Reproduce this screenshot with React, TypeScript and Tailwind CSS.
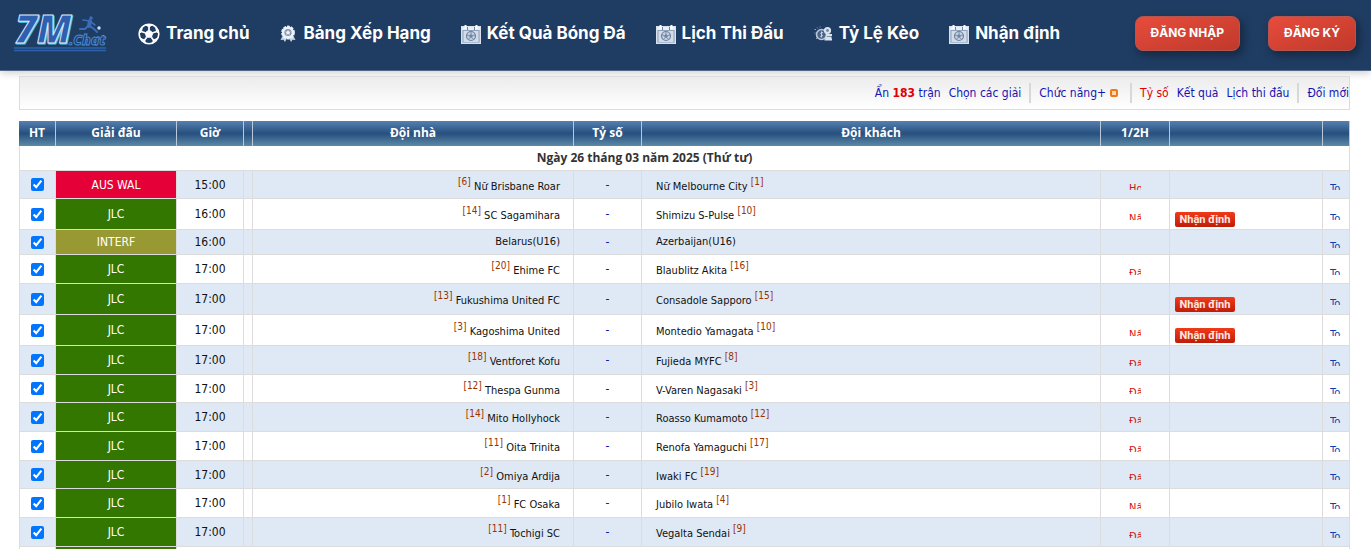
import React from "react";

type Match = {
  league: string;
  time: string;
  home: string;
  homeRank?: string;
  away: string;
  awayRank?: string;
  half?: string;
  tip?: boolean;
  height: string;
};

const leagueColors: Record<string, string> = {
  "AUS WAL": "bg-[#e60038]",
  JLC: "bg-[#337700]",
  INTERF: "bg-[#999933]",
};

const matches: Match[] = [
  { league: "AUS WAL", time: "15:00", home: "Nữ Brisbane Roar", homeRank: "6", away: "Nữ Melbourne City", awayRank: "1", half: "Ho", height: "h-7" },
  { league: "JLC", time: "16:00", home: "SC Sagamihara", homeRank: "14", away: "Shimizu S-Pulse", awayRank: "10", half: "Nấ", tip: true, height: "h-[31px]" },
  { league: "INTERF", time: "16:00", home: "Belarus(U16)", away: "Azerbaijan(U16)", height: "h-[25px]" },
  { league: "JLC", time: "17:00", home: "Ehime FC", homeRank: "20", away: "Blaublitz Akita", awayRank: "16", half: "Đấ", height: "h-[29px]" },
  { league: "JLC", time: "17:00", home: "Fukushima United FC", homeRank: "13", away: "Consadole Sapporo", awayRank: "15", tip: true, height: "h-[31px]" },
  { league: "JLC", time: "17:00", home: "Kagoshima United", homeRank: "3", away: "Montedio Yamagata", awayRank: "10", half: "Nấ", tip: true, height: "h-[31px]" },
  { league: "JLC", time: "17:00", home: "Ventforet Kofu", homeRank: "18", away: "Fujieda MYFC", awayRank: "8", half: "Đấ", height: "h-[29px]" },
  { league: "JLC", time: "17:00", home: "Thespa Gunma", homeRank: "12", away: "V-Varen Nagasaki", awayRank: "3", half: "Đấ", height: "h-7" },
  { league: "JLC", time: "17:00", home: "Mito Hollyhock", homeRank: "14", away: "Roasso Kumamoto", awayRank: "12", half: "Đấ", height: "h-[29px]" },
  { league: "JLC", time: "17:00", home: "Oita Trinita", homeRank: "11", away: "Renofa Yamaguchi", awayRank: "17", half: "Đấ", height: "h-[29px]" },
  { league: "JLC", time: "17:00", home: "Omiya Ardija", homeRank: "2", away: "Iwaki FC", awayRank: "19", half: "Đấ", height: "h-7" },
  { league: "JLC", time: "17:00", home: "FC Osaka", homeRank: "1", away: "Jubilo Iwata", awayRank: "4", half: "Nấ", height: "h-[29px]" },
  { league: "JLC", time: "17:00", home: "Tochigi SC", homeRank: "11", away: "Vegalta Sendai", awayRank: "9", half: "Đấ", height: "h-[29px]" },
];

const Logo = () => (
  <svg width="94" height="38" viewBox="0 0 94 38" className="overflow-visible" aria-label="7M.Chat">
    <g fontFamily="'Open Sans', sans-serif" fontStyle="italic" fontWeight="800">
      <text x="2" y="30" fontSize="38" fill="#4fc3ea" stroke="#4fc3ea" strokeWidth="1">7M</text>
      <text x="1" y="29" fontSize="38" fill="#2f5fae" stroke="#dbe9f8" strokeWidth="1">7M</text>
      <text x="55" y="31" fontSize="14" fill="#1f3f7c" stroke="#4d93d6" strokeWidth="0.8">.Chat</text>
    </g>
    <g stroke="#3b6cb8" strokeLinecap="round" strokeLinejoin="round" fill="none">
      <circle cx="77" cy="4" r="1.8" fill="#3b6cb8" stroke="none" />
      <path d="M76 7 L75 12" strokeWidth="4" />
      <path d="M76 7 L69 6 M77 8 L81 11" strokeWidth="1.6" />
      <path d="M74 12 L71 15 L66 15 M76 12 L80 15 L83 18" strokeWidth="2" />
    </g>
    <circle cx="85" cy="14" r="1.7" fill="#cfe0f3" />
    <path d="M0 34H92M0 36.500H92" stroke="#2f62ad" strokeWidth="1.500" />
  </svg>
);

const BallIcon = () => (
  <svg width="22" height="22" viewBox="0 0 22 22" fill="none" stroke="#fff">
    <circle cx="11" cy="11" r="9.800" strokeWidth="1.600" />
    <path d="M11 7 L14.800 9.800 L13.400 14.200 H8.600 L7.200 9.800 Z" fill="#fff" />
    <path d="M11 7V3M14.800 9.800L19 8.500M13.400 14.200L16 18M8.600 14.200L6 18M7.200 9.800L3 8.500" strokeWidth="1.700" />
    <path
      d="M7.500 1.800L11 4L14.500 1.800ZM17.800 4.500L18.500 8.600L20.600 10.500ZM19 15.500L15.500 17L14.500 20ZM3 15.500L6.500 17L7.500 20ZM4.200 4.500L3.500 8.600L1.400 10.500Z"
      fill="#fff"
    />
  </svg>
);

const AwardIcon = () => (
  <svg width="18" height="18" viewBox="0 0 18 18">
    <path d="M4 10L1.500 15L4.500 14.800L6 17L8 13ZM14 10L16.500 15L13.500 14.800L12 17L10 13Z" fill="#c9d5e4" />
    <circle cx="9" cy="7.500" r="6" fill="#eef3f9" />
    <circle cx="9" cy="7.500" r="6" fill="none" stroke="#eef3f9" strokeWidth="1.800" strokeDasharray="2.800 1" />
    <circle cx="9" cy="7.500" r="3.600" fill="#7f94b2" />
    <path d="M9 4.700L9.900 6.600L11.900 6.800L10.400 8.100L10.800 10.100L9 9.100L7.200 10.100L7.600 8.100L6.100 6.800L8.100 6.600Z" fill="#eef3f9" />
  </svg>
);

const CalendarIcon = () => (
  <svg width="20" height="20" viewBox="0 0 20 20" fill="none">
    <rect x="0.700" y="2.700" width="18.600" height="16.600" fill="#8fa3bd" stroke="#d8e1ec" strokeWidth="1.400" />
    <path d="M1 4.500H19" stroke="#e8eef5" strokeWidth="3" />
    <path d="M4.500 1V5M15.500 1V5" stroke="#fff" strokeWidth="2" />
    <path d="M6.500 3V6M13.500 3V6" stroke="#6f86a6" />
    <rect x="2.500" y="7" width="15" height="11" fill="#d3dce8" />
    <circle cx="10" cy="12" r="4.500" fill="#c4d0df" stroke="#6d84a4" strokeWidth="1.200" />
    <path d="M10 10L12 11.500L11.200 13.800H8.800L8 11.500Z" fill="#6d84a4" />
    <path d="M10 10V7.500M12 11.500L14.300 10.800M11.200 13.800L12.700 15.800M8.800 13.800L7.300 15.800M8 11.500L5.700 10.800" stroke="#6d84a4" strokeWidth="0.900" />
  </svg>
);

const OddsIcon = () => (
  <svg width="19" height="16" viewBox="0 0 19 16" fill="none">
    <circle cx="7.500" cy="8.500" r="5" fill="#4a6387" stroke="#b9c7d9" strokeWidth="1.600" />
    <path d="M9 6.700C7 5.600 6 7.600 7.500 8.400S8.500 11 6.200 10.200M7.600 5.500V11.500" stroke="#c9d5e4" />
    <circle cx="13.500" cy="4.500" r="3.600" fill="#dbe4ee" />
    <circle cx="13.500" cy="4.500" r="1.400" fill="#6f86a6" />
    <path d="M12 9H18M11.500 11.500H17.500M10.500 13.500H18" stroke="#dbe4ee" strokeWidth="1.900" />
    <path d="M0.500 3.500H2M3 1.500L4 2.500M0.500 7H1.500M6 0.500V1.500M2 12L3 13" stroke="#8fa3bd" />
  </svg>
);

const navItems = [
  { label: "Trang chủ", icon: <BallIcon /> },
  { label: "Bảng Xếp Hạng", icon: <AwardIcon /> },
  { label: "Kết Quả Bóng Đá", icon: <CalendarIcon /> },
  { label: "Lịch Thi Đấu", icon: <CalendarIcon /> },
  { label: "Tỷ Lệ Kèo", icon: <OddsIcon /> },
  { label: "Nhận định", icon: <CalendarIcon /> },
];

const AuthButton = ({ children }: { children: React.ReactNode }) => (
  <button className="h-[35px] rounded-lg border border-[#b4554f] bg-linear-to-br from-[#e74c3c] to-[#c0392b] px-[15px] text-xs font-bold whitespace-nowrap text-white shadow-[3px_4px_8px_rgba(0,0,0,0.35)]">
    {children}
  </button>
);

const Header = () => (
  <header className="flex h-[71px] items-center border-b border-[#56688a] bg-[#1f3c62] pr-[15px] pb-1 pl-3.5 font-['Inter',sans-serif] shadow-[0_2px_8px_rgba(0,0,0,0.2)]">
    <a href="#" className="shrink-0">
      <Logo />
    </a>
    <nav className="ml-[30px] flex items-center gap-[30px] pt-0.5">
      {navItems.map((item) => (
        <a
          key={item.label}
          href="#"
          className="flex items-center gap-1.5 text-[17px] font-bold whitespace-nowrap text-white"
        >
          {item.icon}
          {item.label}
        </a>
      ))}
    </nav>
    <div className="ml-auto flex gap-7">
      <AuthButton>ĐĂNG NHẬP</AuthButton>
      <AuthButton>ĐĂNG KÝ</AuthButton>
    </div>
  </header>
);

const Divider = () => <span className="h-5 w-0.5 bg-[#d8d8d8]" />;

const Toolbar = () => (
  <div className="flex h-[34px] items-center justify-end border border-[#dcdcdc] bg-linear-to-b from-[#ececec] to-white text-xs whitespace-nowrap text-[#1414b4]">
    <a href="#">
      Ẩn <b className="text-[#e00000]">183</b> trận
    </a>
    <a href="#" className="mr-2 ml-2">Chọn các giải</a>
    <Divider />
    <a href="#" className="mr-3 ml-2 flex items-center gap-1">
      Chức năng+
      <span className="h-2 w-2 rounded-xs border-2 border-[#f07818] bg-[#fbd9b4]" />
    </a>
    <Divider />
    <a href="#" className="ml-2 text-[#e00000]">Tỷ số</a>
    <a href="#" className="ml-2">Kết quả</a>
    <a href="#" className="mr-2 ml-2">Lịch thi đấu</a>
    <Divider />
    <a href="#" className="ml-2">Đổi mới</a>
  </div>
);

const Rank = ({ value }: { value: string }) => (
  <sup className="text-[10px] text-[#993300]">[{value}]</sup>
);

// fixed-size cell link, only the top of the label fits
const Clipped = ({ text, color }: { text: string; color: string }) => (
  <a href="#" className={`mx-auto block h-[11px] w-3 overflow-hidden pt-1 text-left text-[11px] leading-3 ${color}`}>
    {text}
  </a>
);

const columns = ["HT", "Giải đấu", "Giờ", "", "Đội nhà", "Tỷ số", "Đội khách", "1/2H", "", ""];

const MatchRow = ({ match, striped }: { match: Match; striped: boolean }) => (
  <tr className={`${match.height} ${striped ? "bg-[#dfe9f5]" : "bg-white"} *:border-r *:border-b *:border-[#dcdcdc]`}>
    <td className="border-l text-center">
      <input
        type="checkbox"
        defaultChecked
        aria-label={`${match.home} - ${match.away}`}
        className="mx-auto block h-[13px] w-[13px]"
      />
    </td>
    <td className={`text-center text-white ${leagueColors[match.league]}`}>{match.league}</td>
    <td className="text-center">{match.time}</td>
    <td></td>
    <td className={`pr-[13px] text-right text-[11px] ${match.homeRank ? "pt-1" : ""}`}>
      {match.homeRank && <Rank value={match.homeRank} />} {match.home}
    </td>
    <td className="text-center text-[#1414b4]">-</td>
    <td className={`pl-3.5 text-[11px] ${match.awayRank ? "pt-1" : ""}`}>
      {match.away} {match.awayRank && <Rank value={match.awayRank} />}
    </td>
    <td>{match.half && <Clipped text={match.half} color="text-[#d81010]" />}</td>
    <td className="pb-0.5 pl-[5px] align-bottom">
      {match.tip && (
        <a
          href="#"
          className="block h-[15px] w-[60px] rounded-xs bg-linear-to-b from-[#f03a1a] to-[#c01c08] text-center font-['Roboto',sans-serif] text-[11px] leading-4 font-bold text-[#ffe8e0]"
        >
          Nhận định
        </a>
      )}
    </td>
    <td>
      <Clipped text="To" color="text-[#1040b0]" />
    </td>
  </tr>
);

const MatchTable = () => (
  <table className="mt-[11px] w-full table-fixed border-separate border-spacing-0 text-xs leading-4">
    <colgroup>
      <col className="w-[37px]" />
      <col className="w-[121px]" />
      <col className="w-[67px]" />
      <col className="w-[9px]" />
      <col className="w-[321px]" />
      <col className="w-[68px]" />
      <col />
      <col className="w-[69px]" />
      <col className="w-[153px]" />
      <col className="w-[27px]" />
    </colgroup>
    <thead className="font-['Open_Sans',sans-serif]">
      <tr className="h-[25px] text-white">
        {columns.map((name, i) => (
          <th
            key={i}
            className="border-r border-[#b9c8da] bg-linear-to-b from-[#5580b0] from-0% via-[#27507f] via-50% to-[#5c8aa6] to-100% pb-0.5 font-bold"
          >
            {name}
          </th>
        ))}
      </tr>
    </thead>
    <tbody>
      <tr className="h-[25px]">
        <td
          colSpan={10}
          className="border-x border-b border-[#dcdcdc] pr-20 text-center font-['Open_Sans',sans-serif] font-bold text-[#333]"
        >
          Ngày 26 tháng 03 năm 2025 (Thứ tư)
        </td>
      </tr>
      {matches.map((match, i) => (
        <MatchRow key={match.home} match={match} striped={i % 2 === 0} />
      ))}
      <tr className="h-[29px] *:border-r *:border-[#dcdcdc]">
        <td className="border-l"></td>
        <td className="bg-[#337700]"></td>
        <td colSpan={8}></td>
      </tr>
    </tbody>
  </table>
);

const App = () => {
  return (
    <div className="h-screen overflow-hidden bg-white">
      <Header />
      <main className="mt-[5px] mr-[21px] ml-[19px] font-['DejaVu_Sans_Condensed',sans-serif] text-[#111]">
        <Toolbar />
        <MatchTable />
      </main>
    </div>
  );
};

export default App;
